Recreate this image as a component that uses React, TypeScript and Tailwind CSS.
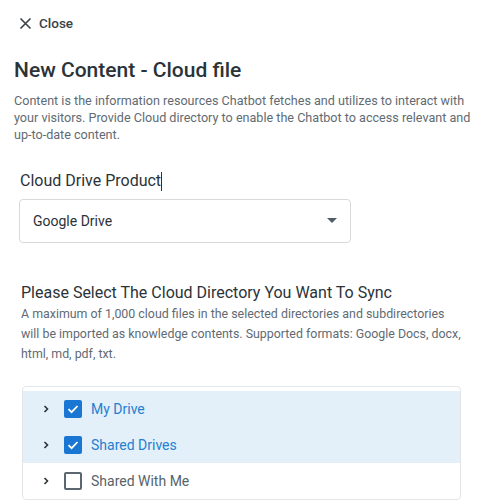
import React from 'react';

const font = { fontFamily: 'Roboto, "Liberation Sans", sans-serif' };

function Chevron() {
  return (
    <svg width="10" height="10" viewBox="0 0 10 10" className="shrink-0">
      <path d="M3.5 2 L6.5 5 L3.5 8" fill="none" stroke="#2b3338" strokeWidth="1.6" />
    </svg>
  );
}

function Checkbox({ checked }: { checked: boolean }) {
  if (checked) {
    return (
      <div className="w-[18px] h-[18px] rounded-[2px] bg-[#1976d2] flex items-center justify-center shrink-0">
        <svg width="14" height="14" viewBox="0 0 14 14">
          <path d="M2.5 7.2 L5.6 10.2 L11.5 4" fill="none" stroke="white" strokeWidth="1.8" />
        </svg>
      </div>
    );
  }
  return <div className="w-[18px] h-[18px] rounded-[2px] border-2 border-[#5b6770] shrink-0" />;
}

function TreeRow({ label, checked }: { label: string; checked: boolean }) {
  return (
    <div className={`flex items-center h-[36px] pl-[18px] ${checked ? 'bg-[#e3eff9]' : ''}`}>
      <Chevron />
      <div className="ml-[13px]">
        <Checkbox checked={checked} />
      </div>
      <span className={`ml-[9px] text-[14px] ${checked ? 'text-[#2580d0]' : 'text-[#56636b]'}`}>{label}</span>
    </div>
  );
}

export default function App() {
  return (
    <div className="w-[490px] h-[501px] bg-white overflow-hidden" style={font}>
      <div className="flex items-center pt-[15px] pl-[19px] h-[16px] box-content">
        <svg width="13" height="13" viewBox="0 0 13 13">
          <path d="M1.5 1.5 L11.5 11.5 M11.5 1.5 L1.5 11.5" stroke="#3a4248" strokeWidth="1.6" />
        </svg>
        <span className="ml-[7px] text-[13.5px] font-medium text-[#3a4248]">Close</span>
      </div>

      <h1 className="mt-[25px] ml-[14px] text-[21px] leading-[28px] font-medium text-[#2b3338]">New Content - Cloud file</h1>
      <p className="mt-[8px] ml-[14px] mr-[10px] text-[12.6px] leading-[17px] text-[#5f6b73]">
        Content is the information resources Chatbot fetches and utilizes to interact with your visitors. Provide Cloud
        directory to enable the Chatbot to access relevant and up-to-date content.
      </p>

      <div className="mt-[27px] ml-[20px] flex items-center h-[22px]">
        <span className="text-[16px] text-[#2b3338]">Cloud Drive Product</span>
        <span className="w-px h-[19px] bg-[#2b3338]" />
      </div>

      <div className="mt-[7px] ml-[19px] w-[332px] h-[44px] border border-[#d6dadd] rounded-[4px] flex items-center justify-between pl-[13px] pr-[13px]">
        <span className="text-[14px] text-[#2b3338]">Google Drive</span>
        <svg width="10" height="6" viewBox="0 0 10 6">
          <path d="M0 0 L10 0 L5 5 Z" fill="#4f5d66" />
        </svg>
      </div>

      <h2 className="mt-[39px] ml-[21px] text-[16px] leading-[22px] text-[#2b3338]">
        Please Select The Cloud Directory You Want To Sync
      </h2>
      <p className="ml-[21px] mr-[27px] text-[12.4px] leading-[20px] text-[#5f6b73]">
        A maximum of 1,000 cloud files in the selected directories and subdirectories will be imported as knowledge
        contents. Supported formats: Google Docs, docx, html, md, pdf, txt.
      </p>

      <div className="mt-[22px] ml-[22px] w-[439px] border border-[#e3e6e8] rounded-[4px] pt-[4px]">
        <TreeRow label="My Drive" checked />
        <TreeRow label="Shared Drives" checked />
        <TreeRow label="Shared With Me" checked={false} />
      </div>
    </div>
  );
}
